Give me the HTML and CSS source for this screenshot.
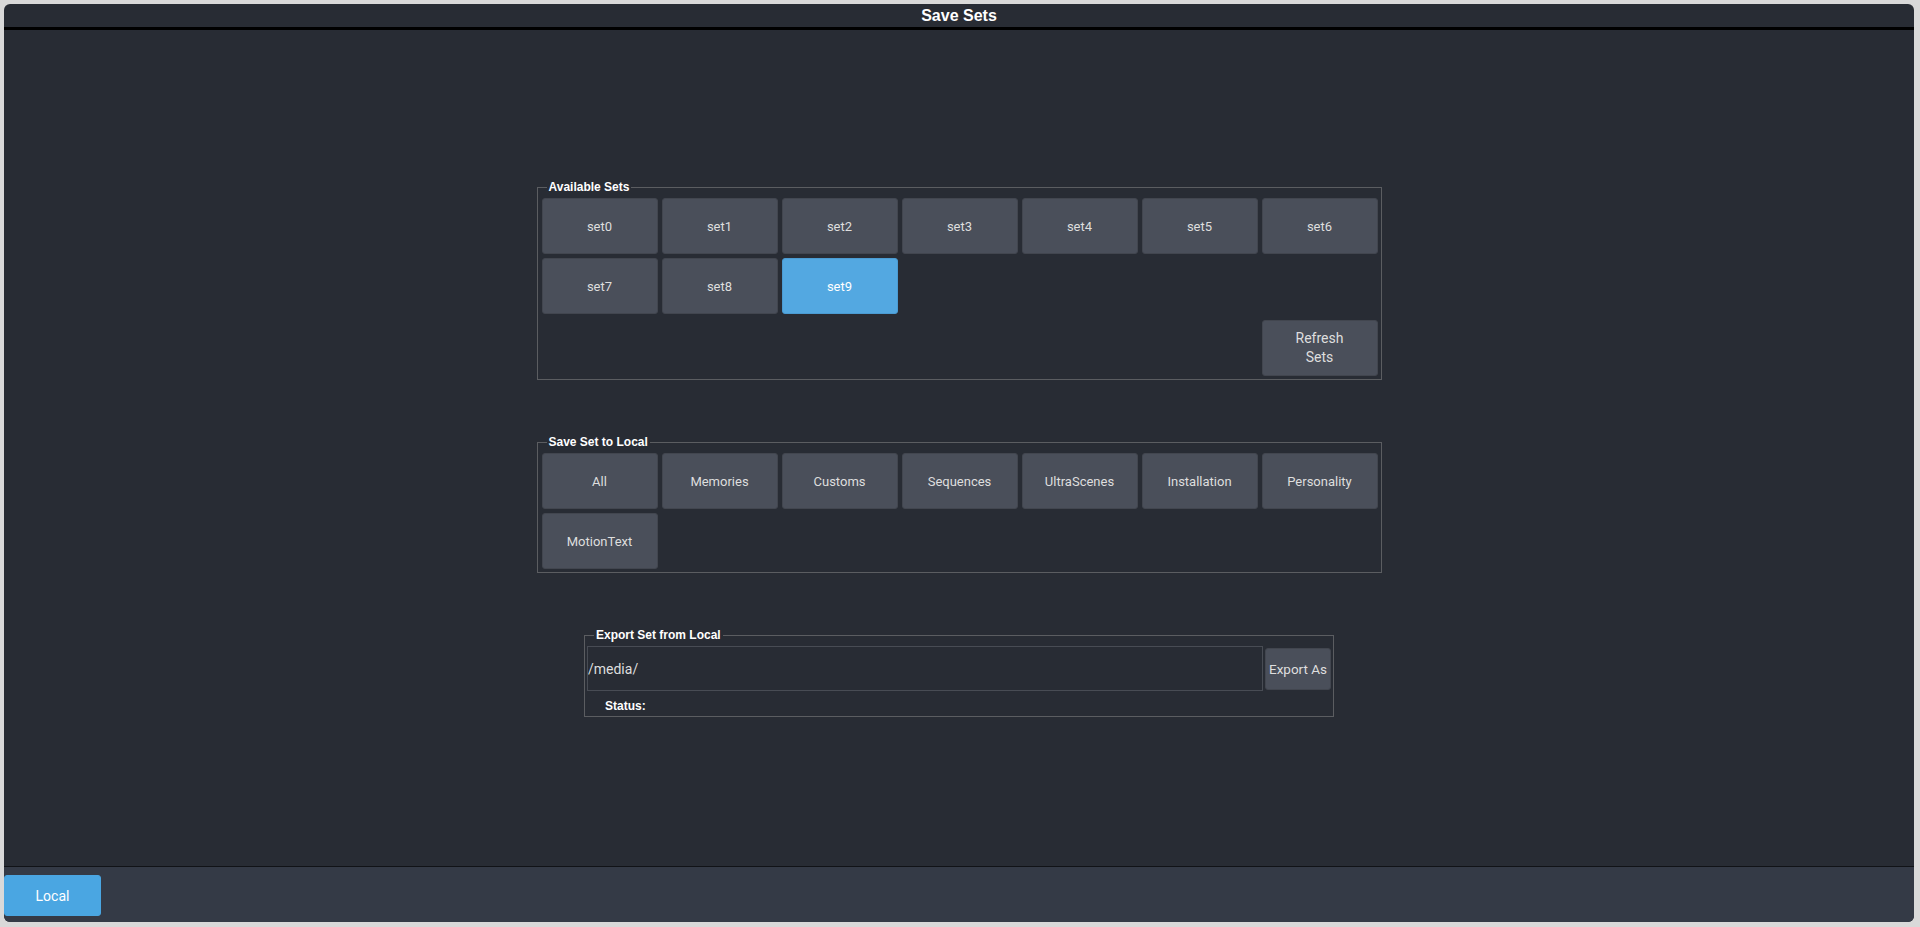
FILE: index.html
```html
<!DOCTYPE html>
<html>
<head>
  <meta charset="utf-8">
  <link rel="stylesheet" href="styles.css">
</head>
<body>
  <div class="window">
    <div class="titlebar">Save Sets</div>

    <div class="main">
      <fieldset class="group group-wide">
        <legend>Available Sets</legend>
        <div class="grid">
          <button class="btn">set0</button>
          <button class="btn">set1</button>
          <button class="btn">set2</button>
          <button class="btn">set3</button>
          <button class="btn">set4</button>
          <button class="btn">set5</button>
          <button class="btn">set6</button>
          <button class="btn">set7</button>
          <button class="btn">set8</button>
          <button class="btn active">set9</button>
          <button class="btn btn-refresh">Refresh<br>Sets</button>
        </div>
      </fieldset>

      <fieldset class="group group-wide">
        <legend>Save Set to Local</legend>
        <div class="grid">
          <button class="btn">All</button>
          <button class="btn">Memories</button>
          <button class="btn">Customs</button>
          <button class="btn">Sequences</button>
          <button class="btn">UltraScenes</button>
          <button class="btn">Installation</button>
          <button class="btn">Personality</button>
          <button class="btn">MotionText</button>
        </div>
      </fieldset>

      <fieldset class="group group-export">
        <legend>Export Set from Local</legend>
        <div class="export-row">
          <input class="path" type="text" value="/media/">
          <button class="btn btn-export">Export As</button>
        </div>
        <div class="status">Status:</div>
      </fieldset>
    </div>

    <div class="footer">
      <button class="btn btn-local">Local</button>
    </div>
  </div>
</body>
</html>
```

FILE: styles.css
```css
:root {
  --frame: #d9d9d9;
  --bg: #282c34;
  --footer-bg: #343a46;
  --btn-bg: #4a4f5a;
  --btn-edge: #42464f;
  --btn-text: #dedede;
  --active: #53a8e1;
  --line: #5b5d61;
  --input-line: #484c54;
}

html, body {
  margin: 0;
  height: 100%;
}

body {
  background: var(--frame);
  padding: 4px 6px 5px 4px;
  box-sizing: border-box;
  font-family: Roboto, "Liberation Sans", sans-serif;
}

.window {
  height: 100%;
  display: flex;
  flex-direction: column;
  background: var(--bg);
  border-radius: 6px;
  overflow: hidden;
}

.titlebar {
  height: 23px;
  border-bottom: 3px solid #000;
  text-align: center;
  color: #fff;
  font: bold 16px/23px "Liberation Sans", Arial, sans-serif;
}

.main {
  flex: 1;
  display: flex;
  flex-direction: column;
  align-items: center;
  gap: 56px;
  padding-top: 151px;
}

.group {
  margin: 0;
  min-width: 0;
  box-sizing: border-box;
  border: 1px solid var(--line);
  padding: 5px 3px 3px 4px;
}

.group-wide {
  width: 845px;
}

.group-export {
  width: 750px;
  padding: 5px 2px 0 2px;
}

legend {
  margin-left: 5px;
  padding: 0 2px;
  color: #fff;
  font: bold 12px/12px "Liberation Sans", Arial, sans-serif;
}

.group-export legend {
  margin-left: 7px;
}

.grid {
  display: grid;
  grid-template-columns: repeat(7, 116px);
  gap: 4px;
}

.btn {
  height: 56px;
  margin: 0;
  padding: 0;
  background: var(--btn-bg);
  border: 1px solid var(--btn-edge);
  border-radius: 3px;
  color: var(--btn-text);
  font-family: Roboto, "Liberation Sans", sans-serif;
  font-size: 13px;
}

.btn.active {
  background: var(--active);
  border-color: #4b9bd2;
  color: #fff;
}

.btn-refresh {
  grid-row: 3;
  grid-column: 7;
  margin-top: 2px;
  font-size: 14px;
  line-height: 19px;
}

.export-row {
  display: flex;
  align-items: center;
  gap: 2px;
}

.path {
  width: 676px;
  height: 45px;
  box-sizing: border-box;
  margin: 0;
  padding: 0;
  background: transparent;
  border: 1px solid var(--input-line);
  color: #dedede;
  font-family: Roboto, "Liberation Sans", sans-serif;
  font-size: 14px;
  outline: none;
}

.btn-export {
  width: 66px;
  height: 42px;
  font-size: 13.5px;
}

.status {
  margin: 8px 0 0 18px;
  height: 17px;
  color: #fff;
  font: bold 12px/14px "Liberation Sans", Arial, sans-serif;
}

.footer {
  height: 56px;
  border-top: 1px solid #111317;
  background: var(--footer-bg);
  padding-top: 8px;
  box-sizing: border-box;
}

.btn-local {
  width: 97px;
  height: 41px;
  background: #4aa6e2;
  border-color: #4aa6e2;
  color: #fff;
  font-size: 14px;
}
```
